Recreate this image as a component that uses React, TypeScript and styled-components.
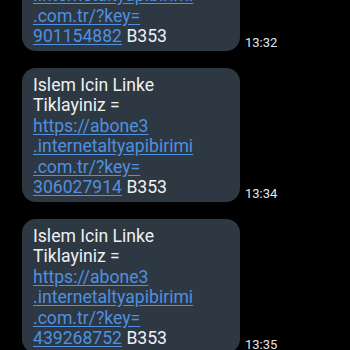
import { createGlobalStyle, styled } from "styled-components";

const messages = [
  { key: "901154882", time: "13:32" },
  { key: "306027914", time: "13:34" },
  { key: "439268752", time: "13:35" },
];

export default function App() {
  return (
    <>
      <GlobalStyle />
      <Screen>
        <List>
          {messages.map((m) => (
            <Row key={m.key}>
              <Bubble>
                Islem Icin Linke
                <br />
                Tiklayiniz =
                <br />
                <Link>
                  https://abone3
                  <br />
                  .internetaltyapibirimi
                  <br />
                  .com.tr/?key=
                  <br />
                  {m.key}
                </Link>{" "}
                B353
              </Bubble>
              <Time>{m.time}</Time>
            </Row>
          ))}
        </List>
      </Screen>
    </>
  );
}

const GlobalStyle = createGlobalStyle`
  html, body {
    margin: 0;
    background: #000;
    overflow: hidden;
  }
`;

const Screen = styled.div`
  width: 350px;
  height: 350px;
  overflow: hidden;
  background: #000;
  font-family: Roboto, "Noto Sans", sans-serif;
`;

const List = styled.div`
  display: flex;
  flex-direction: column;
  gap: 17px;
  padding-left: 22px;
  margin-top: -83px;
`;

const Row = styled.div`
  display: flex;
  align-items: flex-end;
`;

const Bubble = styled.div`
  width: 218px;
  height: 134px;
  box-sizing: border-box;
  padding: 7px 6px 5px 11px;
  border-radius: 14px;
  background: #2e3842;
  color: #eef0f2;
  font-size: 17.6px;
  line-height: 20.4px;
`;

const Link = styled.span`
  color: #4f90e0;
  text-decoration: underline;
  text-underline-offset: 2px;
`;

const Time = styled.span`
  margin: 0 0 1px 5px;
  color: #e4e6e8;
  font-size: 13px;
`;
